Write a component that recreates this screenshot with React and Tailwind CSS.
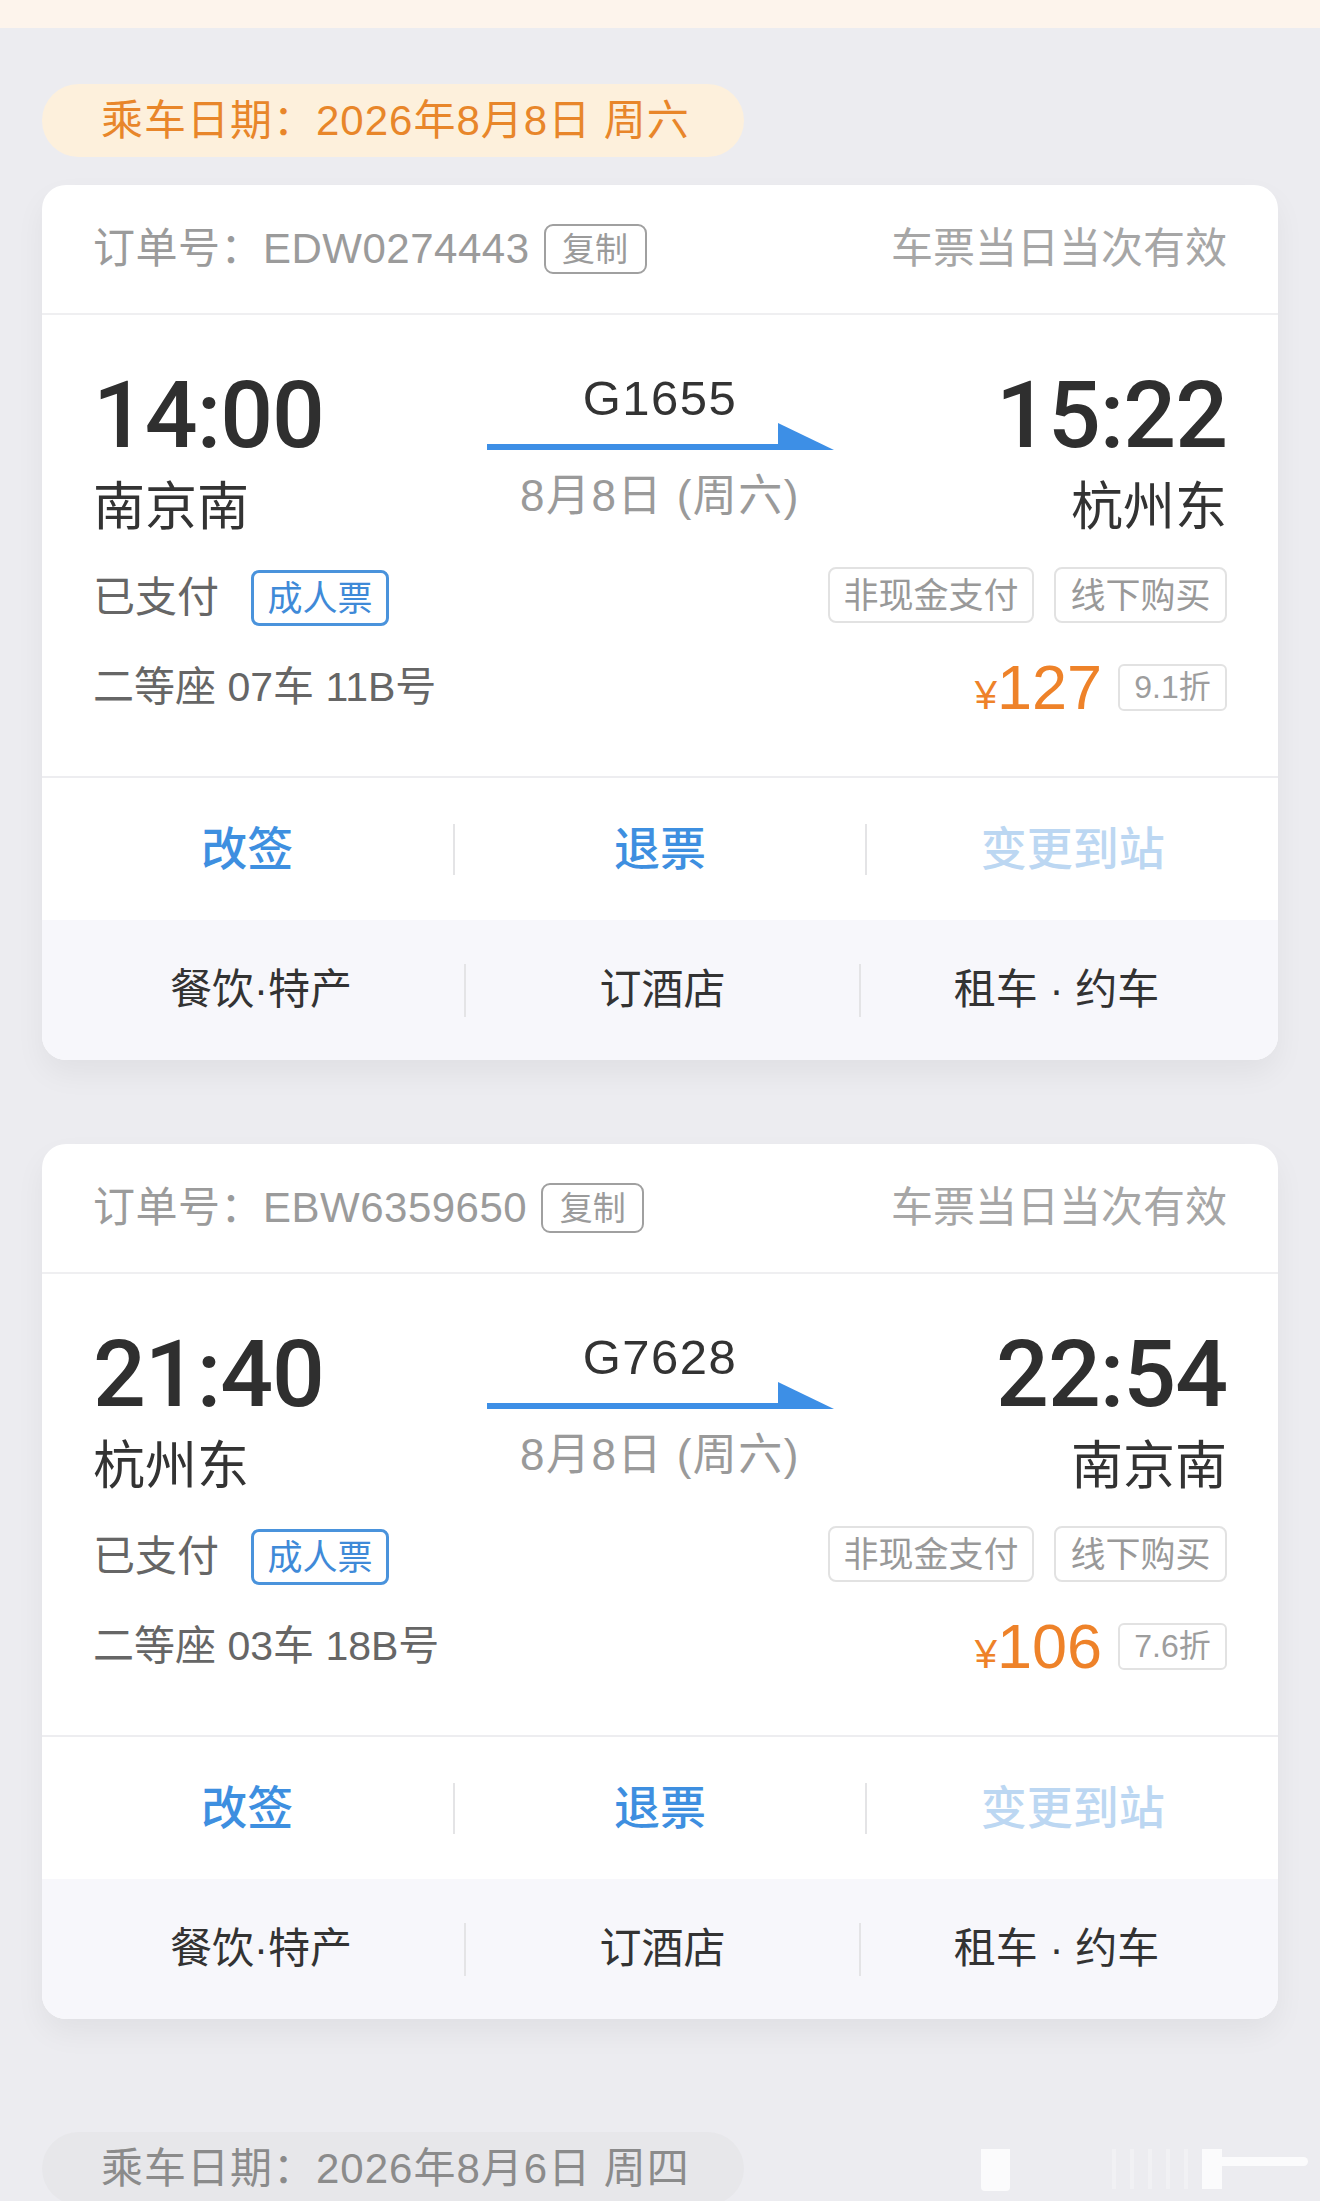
import React from "react";

const tickets = [
  {
    orderNo: "EDW0274443",
    depTime: "14:00",
    arrTime: "15:22",
    from: "南京南",
    to: "杭州东",
    train: "G1655",
    date: "8月8日 (周六)",
    seat: "二等座 07车 11B号",
    price: "127",
    discount: "9.1折",
  },
  {
    orderNo: "EBW6359650",
    depTime: "21:40",
    arrTime: "22:54",
    from: "杭州东",
    to: "南京南",
    train: "G7628",
    date: "8月8日 (周六)",
    seat: "二等座 03车 18B号",
    price: "106",
    discount: "7.6折",
  },
];

function TrainArrow() {
  return (
    <svg width="347" height="27" viewBox="0 0 347 27" className="block">
      <rect x="0" y="21" width="300" height="6" fill="#3d8fe6" />
      <polygon points="291,0 347,27 291,27" fill="#3d8fe6" />
    </svg>
  );
}

function Divider({ h = "h-[51px]" }) {
  return <div className={`w-[2px] ${h} bg-[#e4e4e6]`} />;
}

function TicketCard({ t }) {
  return (
    <div className="rounded-[24px] bg-white overflow-hidden shadow-[0_14px_30px_rgba(0,0,0,0.05)]">
      {/* header */}
      <div className="h-[130px] flex items-center justify-between px-[51px] border-b-2 border-[#efeff1]">
        <div className="flex items-center">
          <span className="text-[42px] leading-none text-[#9b9b9b] tracking-[0.5px]">
            订单号：{t.orderNo}
          </span>
          <span className="ml-[14px] w-[103px] h-[50px] flex items-center justify-center border-2 border-[#a0a0a0] rounded-[9px] text-[33px] leading-none text-[#9b9b9b]">
            复制
          </span>
        </div>
        <span className="text-[42px] leading-none text-[#a6a6a6]">车票当日当次有效</span>
      </div>

      {/* body */}
      <div className="px-[51px] pt-[54px] pb-[63px] border-b-2 border-[#ededf0]">
        <div className="flex">
          <div className="flex flex-col">
            <span className="font-['Roboto',sans-serif] font-medium text-[93px] leading-none text-[#2f2f2f] tracking-[-1px]">
              {t.depTime}
            </span>
            <span className="mt-[19px] text-[52px] leading-none text-[#333]">{t.from}</span>
          </div>
          <div className="flex-1 flex flex-col items-center pt-[5px]">
            <span className="text-[49px] leading-none text-[#333] tracking-[1.5px]">{t.train}</span>
            <TrainArrow />
            <span className="mt-[24px] text-[44px] leading-none text-[#9a9a9a] tracking-[1.5px]">{t.date}</span>
          </div>
          <div className="flex flex-col items-end">
            <span className="font-['Roboto',sans-serif] font-medium text-[93px] leading-none text-[#2f2f2f] tracking-[-1px]">
              {t.arrTime}
            </span>
            <span className="mt-[19px] text-[52px] leading-none text-[#333]">{t.to}</span>
          </div>
        </div>

        <div className="mt-[36px] h-[58px] flex items-center justify-between">
          <div className="flex items-center">
            <span className="text-[42px] leading-none text-[#666]">已支付</span>
            <span className="ml-[32px] w-[138px] h-[56px] flex items-center justify-center border-[3px] border-[#4a93dc] rounded-[8px] text-[35px] leading-none text-[#3f8ad8]">
              成人票
            </span>
          </div>
          <div className="flex items-center gap-[20px] -mt-[6px]">
            <span className="w-[206px] h-[56px] flex items-center justify-center border-2 border-[#e2e2e2] rounded-[8px] text-[35px] leading-none text-[#999]">
              非现金支付
            </span>
            <span className="w-[173px] h-[56px] flex items-center justify-center border-2 border-[#e2e2e2] rounded-[8px] text-[35px] leading-none text-[#999]">
              线下购买
            </span>
          </div>
        </div>

        <div className="mt-[34px] h-[52px] flex items-center justify-between">
          <span className="text-[41px] leading-none text-[#666]">{t.seat}</span>
          <div className="flex items-center">
            <span className="flex items-baseline text-[#ee8229]">
              <span className="text-[40px] leading-none">¥</span>
              <span className="text-[63px] leading-none">{t.price}</span>
            </span>
            <span className="ml-[16px] w-[109px] h-[47px] flex items-center justify-center border-2 border-[#e2e2e2] rounded-[6px] text-[32px] leading-none text-[#9d9d9d]">
              {t.discount}
            </span>
          </div>
        </div>
      </div>

      {/* actions */}
      <div className="h-[142px] flex items-center">
        <div className="flex-1 text-center text-[46px] leading-none font-medium text-[#3e8fe0]">改签</div>
        <Divider />
        <div className="flex-1 text-center text-[46px] leading-none font-medium text-[#3e8fe0]">退票</div>
        <Divider />
        <div className="flex-1 text-center text-[46px] leading-none font-medium text-[#bcd7f2]">变更到站</div>
      </div>

      {/* services */}
      <div className="h-[140px] flex items-center bg-[#f7f7fb]">
        <div className="w-[422px] text-center text-[42px] leading-none text-[#333] pl-[16px]">餐饮·特产</div>
        <Divider h="h-[53px]" />
        <div className="w-[393px] text-center text-[42px] leading-none text-[#333]">订酒店</div>
        <Divider h="h-[53px]" />
        <div className="flex-1 text-center text-[42px] leading-none text-[#333] pr-[26px]">租车 · 约车</div>
      </div>
    </div>
  );
}

function DatePill({ text, muted }) {
  return (
    <div
      className={`shrink-0 inline-flex items-center h-[73px] w-[702px] pl-[59px] rounded-full text-[42px] leading-none tracking-[1px] ${
        muted ? "bg-[#e7e7ea] text-[#8b8b8b]" : "bg-[#fdf0dc] text-[#e8862a]"
      }`}
    >
      {text}
    </div>
  );
}

export default function App() {
  return (
    <div className="h-[2201px] overflow-hidden bg-[#ececf0] font-['Liberation_Sans','Noto_Sans_CJK_SC',sans-serif]">
      <div className="h-[28px] bg-[#fdf4ec]" />
      <div className="px-[42px] pt-[56px]">
        <DatePill text="乘车日期：2026年8月8日 周六" />
        <div className="mt-[28px] flex flex-col gap-[84px]">
          {tickets.map((t) => (
            <TicketCard key={t.orderNo} t={t} />
          ))}
        </div>
        <div className="mt-[113px] flex items-center">
          <DatePill text="乘车日期：2026年8月6日 周四" muted />
          <div className="ml-[237px] flex items-start h-[42px] mt-[2px]">
            <div className="w-[29px] h-[42px] bg-white/80 rounded-b-[4px]" />
            <div className="ml-[102px] flex gap-[14px] opacity-30">
              <div className="w-[4px] h-[40px] bg-white" />
              <div className="w-[4px] h-[40px] bg-white" />
              <div className="w-[4px] h-[40px] bg-white" />
              <div className="w-[4px] h-[40px] bg-white" />
              <div className="w-[4px] h-[40px] bg-white" />
            </div>
            <div className="ml-[14px] w-[20px] h-[40px] bg-white/80" />
            <div className="mt-[8px] w-[86px] h-[9px] bg-white/80 rounded-r-full" />
          </div>
        </div>
      </div>
    </div>
  );
}
